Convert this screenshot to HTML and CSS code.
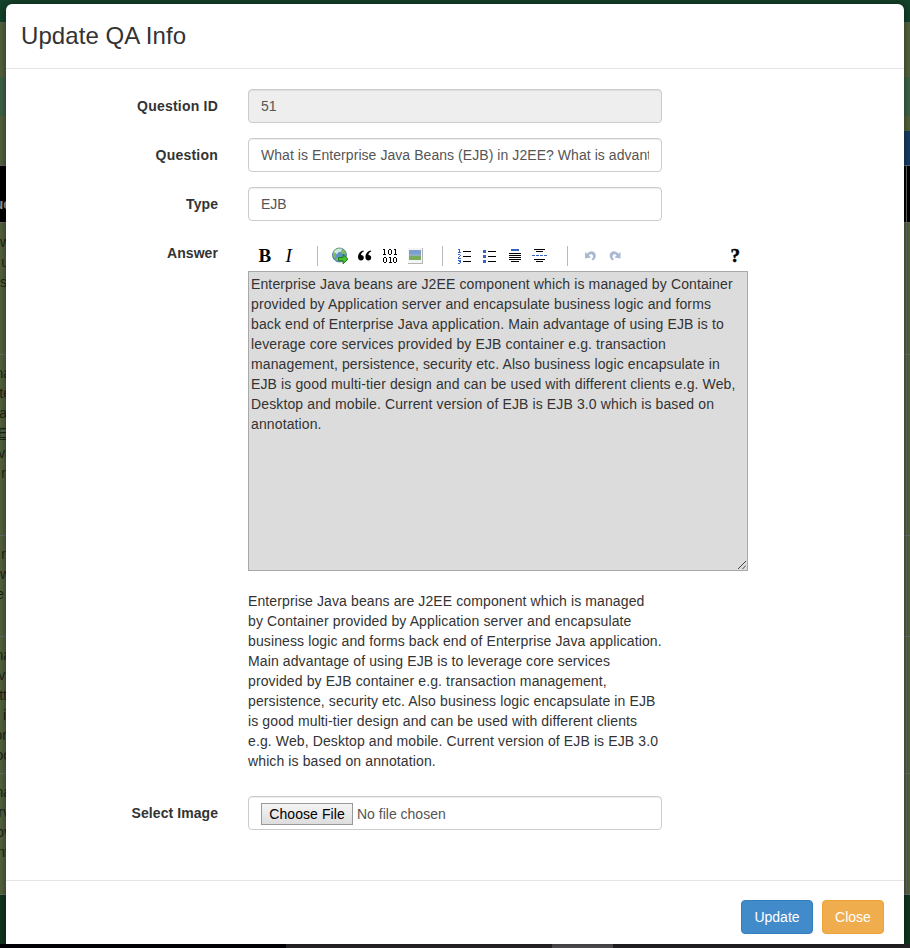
FILE: index.html
```html
<!DOCTYPE html>
<html lang="en">
<head>
<meta charset="utf-8">
<title>Update QA Info</title>
<link rel="stylesheet" href="styles.css">
</head>
<body>
<div class="page">
  <div class="side left">
    <div class="nav"></div><div class="band b1"></div><div class="band b2"></div><div class="band b3"></div>
    <div class="thead"><span>ue</span></div>
    <div class="row r1"><span class="s10">w</span><span class="s9">u</span><span class="s7">s</span></div>
    <div class="row r2"><span>na</span><span>te</span><span class="s7">a</span><span class="s7 under">E</span><span class="s13">va</span><span class="s9">n</span></div>
    <div class="row r3"><span class="s9">n</span><span class="s10">w</span><span class="s4">e</span></div>
    <div class="row r4"><span>na</span><span class="s13">va</span><span class="s7">tt</span><span class="s13">ic</span><span class="s7">or</span><span>oo</span></div>
    <div class="row r5"><span>na</span><span class="s10">rv</span><span>ov</span><span class="s9">nt</span></div>
    <div class="foot"></div>
  </div>
  <div class="side right">
    <div class="nav"></div><div class="band b1"></div><div class="band b2"></div><div class="band b3"><i></i></div>
    <div class="thead"></div>
    <div class="row r1"></div><div class="row r2"></div><div class="row r3"></div><div class="row r4"></div><div class="row r5"></div>
    <div class="foot"></div>
  </div>
  <div class="taskbar"></div>
</div>
<div class="modal">
  <div class="header"><h4>Update QA Info</h4></div>
  <form class="body">
    <div class="group"><label class="wide">Question ID</label><div class="control disabled"><span>51</span></div></div>
    <div class="group"><label class="wide">Question</label><div class="control"><span class="clip">What is Enterprise Java Beans (EJB) in J2EE? What is advantages</span></div></div>
    <div class="group"><label>Type</label><div class="control"><span>EJB</span></div></div>
    <div class="group"><label>Answer</label>
      <div class="editor">
        <svg class="toolbar" width="500" height="34" viewBox="248 237 500 34" shape-rendering="crispEdges">
          <g font-family="Liberation Serif, serif" font-size="19" fill="#000">
            <text x="258.5" y="262" font-weight="bold">B</text><text x="285.5" y="262" font-style="italic">I</text>
          </g>
          <path d="M317.500 246v20M442.500 246v20M567.500 246v20" stroke="#b9b9b9"/>
          <g shape-rendering="auto">
            <circle cx="339.500" cy="255" r="7" fill="#5d92c4" stroke="#41719b" stroke-width=".8"/>
            <path d="M333 253c1-4 4-5 6-5l-1 3-3 2 1 3-1 2c-2-1-2-3-2-5zM341 249c3 0 5 3 5 5l-3 0-3-2zM335 259l4-2 1 4c-2 0-4-1-5-2z" fill="#7fbd63"/>
            <path d="M334 252q2-4 8-3.500l-1 3-3 1-1 2z" fill="#e4f2f7" opacity=".85"/>
            <path d="M338.500 257.500h4.500v-3l5 4.700-5 4.600v-3h-4.500z" fill="#49c22b" stroke="#207b17"/>
            <path d="M363.500 250.500c-3 .4-5.500 3-5.500 6.500 0 2.300 1.300 3.500 3 3.500s2.800-1.200 2.800-2.800-1.100-2.600-2.800-2.600c0-1.800 1-3 2.800-3.700zM370.900 250.500c-3 .4-5.500 3-5.500 6.500 0 2.300 1.300 3.500 3 3.500s2.800-1.200 2.800-2.800-1.100-2.600-2.800-2.600c0-1.800 1-3 2.800-3.700z" fill="#000"/>
          </g>
          <g fill="none" stroke="#000">
            <path d="M383 249.500h2M384.500 249v5M383 254.500h3M388.500 250v4M391.500 250v4M389 249.500h2M389 254.500h2M394 249.500h2M395.500 249v5M394 254.500h3"/>
            <path d="M383.500 258v4M386.500 258v4M384 257.500h2M384 262.500h2M389 257.500h2M390.500 257v5M389 262.500h3M393.500 258v4M396.500 258v4M394 257.500h2M394 262.500h2"/>
          </g>
          <path d="M408 248h15v16h-15z" fill="#b5b5b5"/><path d="M408 248h14v15h-14z" fill="#f5f5f5"/>
          <path d="M409 250h12v6h-12z" fill="#7c9fd0"/><path d="M409 255h12v5h-12z" fill="#7aaa5b"/><path d="M409 254h12v2h-12z" fill="#8daebc"/>
          <g fill="#000">
            <path d="M463 251h8v1h-8zM463 256h8v1h-8zM463 261h8v1h-8zM488 251h8v1h-8zM488 256h8v1h-8zM488 261h8v1h-8z"/>
            <path d="M509 253h12v1h-12zM509 255h12v1h-12zM509 257h12v1h-12zM509 259h12v1h-12zM511 261h8v1h-8z"/>
            <path d="M534 249h11v1h-11zM536 251h7v1h-7zM534 259h11v1h-11zM536 261h7v1h-7z"/>
          </g>
          <path d="M483 250h3v3h-3zM483 255h3v3h-3zM483 260h3v3h-3zM511 249h8v2h-8zM532 255h3v1h-3zM536 255h3v1h-3zM540 255h3v1h-3zM544 255h3v1h-3z" fill="#3564c0"/>
          <path d="M458 249.500h2M459.500 249v4M458 252.500h3M458 254.500h2M460.500 255v1M459 256.500h1M458.500 257v1M458 258.500h3M458 260.500h2M460.500 260v3M459 261.500h1M458 263.500h2" stroke="#3564c0"/>
          <g fill="#aab9d2" shape-rendering="auto">
            <path d="M585 252l2 1.800c2.500-3.300 7-3.400 8.500.2 1 2.800-.6 5.300-2.500 6.500l-1.500-1.200c1.300-1.200 2-2.500 1.200-4-.9-1.600-2.700-1.200-3.800.3l2.200 2-6.100.9z"/>
            <path d="M620.500 252l-2 1.800c-2.500-3.300-7-3.400-8.500.2-1 2.800.6 5.300 2.500 6.500l1.500-1.200c-1.300-1.200-2-2.500-1.200-4 .9-1.600 2.700-1.200 3.800.3l-2.200 2 6.100.9z"/>
          </g>
          <text x="730.5" y="262" font-family="Liberation Serif, serif" font-size="19" font-weight="bold" stroke="#000" stroke-width=".5">?</text>
        </svg>
        <div class="area"><p><span>Enterprise Java beans are J2EE component which is managed by Container</span><span>provided by Application server and encapsulate business logic and forms</span><span>back end of Enterprise Java application. Main advantage of using EJB is to</span><span>leverage core services provided by EJB container e.g. transaction</span><span>management, persistence, security etc. Also business logic encapsulate in</span><span>EJB is good multi-tier design and can be used with different clients e.g. Web,</span><span>Desktop and mobile. Current version of EJB is EJB 3.0 which is based on</span><span>annotation.</span></p>
          <svg class="grip" width="8" height="8"><path d="M0 8L8 0M4.500 8L8 4.500" stroke="#444"/></svg></div>
        <div class="preview"><span>Enterprise Java beans are J2EE component which is managed</span><span>by Container provided by Application server and encapsulate</span><span>business logic and forms back end of Enterprise Java application.</span><span>Main advantage of using EJB is to leverage core services</span><span>provided by EJB container e.g. transaction management,</span><span>persistence, security etc. Also business logic encapsulate in EJB</span><span>is good multi-tier design and can be used with different clients</span><span>e.g. Web, Desktop and mobile. Current version of EJB is EJB 3.0</span><span>which is based on annotation.</span></div>
      </div>
    </div>
    <div class="group"><label>Select Image</label><div class="control file"><b>Choose File</b><span>No file chosen</span></div></div>
  </form>
  <div class="footer"><button type="button" class="btn primary">Update</button><button type="button" class="btn warning">Close</button></div>
</div>
</body>
</html>
```
FILE: styles.css
```css
* { box-sizing: border-box; }
body { margin: 0; width: 910px; height: 948px; overflow: hidden; font: 14px/20px "Liberation Sans", Arial, sans-serif; color: #333; }
.page { height: 948px; display: grid; grid-template-columns: 455px 455px; grid-template-rows: 944px 4px; }
.side { background: #54633e; overflow: hidden; }
.side span { display: block; height: 20px; white-space: nowrap; width: 11px; direction: rtl; color: #1c2417; }
.side .s4 { width: 4px; }
.side .s7 { width: 7px; }
.side .s9 { width: 9px; }
.side .s10 { width: 10px; }
.side .s13 { width: 13px; }
.under { text-decoration: underline; }
.nav { height: 23px; background: #14422a; border-bottom: 1px solid #53635a; }
.b1 { height: 54px; }
.b2 { height: 39px; background: #3e6446; }
.b3 { height: 49px; display: flex; align-items: flex-end; justify-content: flex-end; }
.b3 i { width: 100px; height: 34px; background: #183d66; }
.thead { height: 57px; background: #000; border-top: 1px solid #667; padding-top: 28px; }
.side .thead span { color: #999; font-weight: bold; }
.row { border-top: 1px solid #686d66; padding-top: 9px; }
.r1 { height: 132px; } .r2 { height: 181px; } .r3 { height: 101px; } .r4 { height: 137px; } .r5 { height: 121px; }
.row + .row { padding-top: 8px; }
.right .thead, .right .row { background-image: linear-gradient(90deg, transparent 451px, #686d66 451px, #686d66 452px, transparent 452px); }
.foot { height: 50px; background: #12351f; border-top: 1px solid #687068; }
.taskbar { grid-column: 1 / 3; background: linear-gradient(90deg, #020206 286px, #292729 286px, #292729 552px, #555355 552px, #555355 613px, #252325 613px); }
.modal { position: absolute; left: 6px; top: 4px; width: 898px; height: 940px; background: #fff; border-radius: 6px 6px 0 0; box-shadow: 0 0 8px rgba(0,0,0,.5); display: flex; flex-direction: column; }
.header { height: 65px; border-bottom: 1px solid #e5e5e5; padding: 15px; }
h4 { margin: 0; font-size: 24px; font-weight: normal; line-height: 34px; letter-spacing: .07px; }
.body { flex: 1; padding-top: 20px; }
.group { display: flex; gap: 30px; margin-bottom: 15px; }
label { width: 212px; text-align: right; padding-top: 7px; font-weight: bold; letter-spacing: .07px; }
.wide { letter-spacing: .22px; }
.control { width: 414px; height: 34px; border: 1px solid #ccc; border-radius: 4px; padding: 6px 12px; color: #555; box-shadow: inset 0 1px 1px rgba(0,0,0,.075); white-space: nowrap; }
.disabled { background: #eee; }
.clip { display: block; overflow: hidden; letter-spacing: .06px; }
.editor { width: 500px; display: flex; flex-direction: column; }
.toolbar { display: block; margin-top: 1px; }
.area { height: 300px; background: #dcdcdc; border: 1px solid #a9a9a9; padding: 2px; position: relative; letter-spacing: .122px; }
p { margin: 0; }
.area span, .preview span { display: block; white-space: nowrap; }
.grip { position: absolute; right: 1px; bottom: 1px; }
.preview { margin: 20px 0 10px; letter-spacing: .115px; }
.file { display: flex; align-items: flex-start; gap: 4px; }
.file b { width: 92px; height: 22px; border: 1px solid #999; background: linear-gradient(#f5f5f5, #ddd); color: #000; font-weight: normal; text-align: center; line-height: 20px; letter-spacing: .08px; }
.file span { line-height: 22px; }
.footer { height: 64px; border-top: 1px solid #e5e5e5; padding: 19px 20px 10px; display: flex; justify-content: flex-end; gap: 9px; }
.btn { height: 34px; border: 1px solid; border-radius: 4px; font: inherit; color: #fff; padding: 0; }
.primary { width: 72px; background: #428bca; border-color: #357ebd; }
.warning { width: 62px; background: #f0ad4e; border-color: #eea236; }
```
